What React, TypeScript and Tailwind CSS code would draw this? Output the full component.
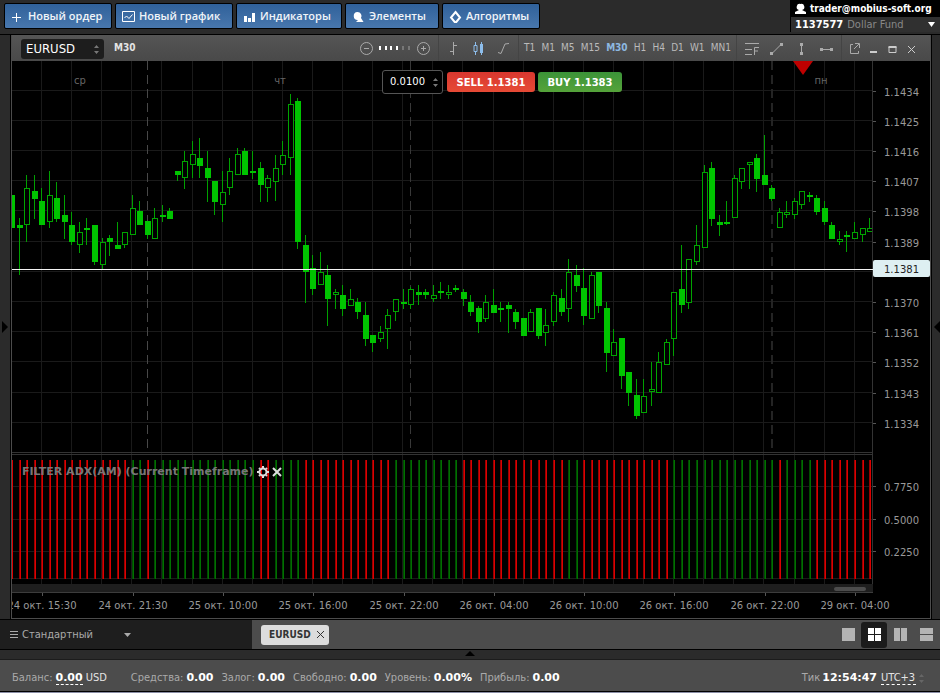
import type { ReactNode } from "react";

// [high, bodyTop, bodyBottom, low, filled]
const candles: number[][] = [
  [195, 195, 228, 228, 1], [218, 225, 228, 275, 1], [175, 188, 225, 242, 0], [175, 191, 199, 219, 1],
  [188, 201, 225, 225, 1], [171, 195, 222, 228, 0], [182, 198, 219, 222, 1], [195, 215, 222, 239, 1],
  [212, 225, 242, 245, 1], [222, 232, 245, 253, 0], [218, 228, 230, 245, 1], [225, 225, 262, 265, 1],
  [238, 242, 265, 269, 0], [235, 238, 242, 256, 1], [222, 245, 249, 249, 1], [232, 232, 245, 248, 0],
  [195, 208, 235, 235, 0], [201, 211, 225, 225, 1], [221, 221, 235, 239, 1], [208, 218, 239, 239, 0],
  [205, 215, 217, 222, 1], [208, 211, 219, 219, 1], [171, 171, 175, 181, 1], [151, 161, 178, 189, 0],
  [141, 154, 165, 178, 0], [138, 158, 166, 178, 1], [151, 168, 178, 202, 1], [181, 181, 202, 215, 1],
  [171, 192, 205, 222, 0], [158, 171, 188, 195, 0], [148, 154, 175, 175, 0], [148, 151, 175, 175, 1],
  [151, 171, 173, 179, 1], [162, 168, 185, 202, 1], [175, 178, 188, 202, 0], [155, 168, 182, 201, 0],
  [141, 155, 165, 175, 0], [94, 104, 158, 175, 0], [98, 101, 242, 249, 1], [235, 245, 272, 303, 1],
  [255, 268, 289, 295, 1], [252, 272, 285, 285, 0], [265, 275, 299, 326, 1], [289, 292, 295, 309, 0],
  [285, 295, 309, 316, 1], [289, 299, 306, 306, 0], [298, 302, 312, 319, 1], [302, 315, 339, 346, 1],
  [335, 335, 343, 352, 1], [326, 332, 339, 342, 0], [309, 315, 329, 349, 0], [299, 299, 312, 321, 0],
  [289, 302, 304, 309, 1], [287, 289, 305, 309, 0], [285, 292, 295, 305, 1], [289, 292, 295, 299, 1],
  [285, 295, 299, 302, 0], [282, 291, 293, 299, 1], [285, 292, 295, 299, 0], [285, 288, 290, 292, 1],
  [289, 292, 299, 306, 1], [295, 302, 312, 316, 1], [306, 308, 322, 333, 1], [295, 302, 319, 322, 0],
  [289, 305, 313, 313, 1], [302, 308, 310, 322, 1], [302, 305, 309, 333, 1], [309, 312, 322, 329, 1],
  [318, 318, 336, 336, 1], [309, 312, 332, 332, 0], [308, 308, 336, 339, 1], [309, 325, 333, 346, 0],
  [292, 295, 322, 326, 0], [289, 298, 312, 316, 1], [259, 272, 309, 322, 0], [265, 275, 286, 292, 1],
  [268, 288, 316, 325, 1], [272, 275, 319, 319, 0], [272, 272, 306, 313, 1], [302, 308, 353, 372, 1],
  [329, 342, 356, 356, 0], [338, 338, 376, 389, 1], [372, 372, 393, 406, 1], [379, 395, 416, 419, 1],
  [379, 396, 413, 413, 0], [362, 389, 392, 406, 0], [352, 362, 393, 393, 0], [339, 342, 365, 365, 0],
  [292, 292, 339, 356, 0], [245, 289, 305, 313, 1], [259, 259, 303, 309, 0], [225, 245, 262, 265, 0],
  [165, 172, 248, 248, 0], [162, 168, 219, 226, 1], [215, 222, 225, 236, 1], [201, 222, 224, 225, 1],
  [175, 178, 218, 218, 0], [168, 168, 182, 189, 0], [162, 162, 165, 189, 0], [154, 158, 179, 192, 1],
  [135, 175, 185, 185, 1], [185, 188, 199, 201, 1], [208, 212, 228, 228, 0], [201, 212, 215, 218, 0],
  [198, 201, 215, 219, 0], [191, 191, 205, 209, 0], [192, 195, 197, 202, 1], [195, 198, 212, 215, 1],
  [201, 208, 222, 225, 1], [222, 225, 239, 239, 1], [231, 239, 242, 245, 0], [231, 235, 237, 252, 1],
  [222, 232, 239, 239, 0], [228, 228, 235, 242, 0], [218, 228, 232, 232, 0],
];

// green stretches of the ADX filter, everything else is red
const upRanges = [[16, 17], [19, 32], [35, 38], [51, 59], [74, 75], [88, 101], [103, 106]];
const isUp = (i: number) => upRanges.some(([a, b]) => i >= a && i <= b);

const prices = ["1.1434", "1.1425", "1.1416", "1.1407", "1.1398", "1.1389", "", "1.1370", "1.1361", "1.1352", "1.1343", "1.1334"];
const levels: [string, number][] = [["0.7750", 486], ["0.5000", 519], ["0.2250", 551]];
const dates = ["24 окт. 15:30", "24 окт. 21:30", "25 окт. 10:00", "25 окт. 16:00", "25 окт. 22:00", "26 окт. 04:00", "26 окт. 10:00", "26 окт. 16:00", "26 окт. 22:00", "29 окт. 04:00"];
const timeframes = ["T1", "M1", "M5", "M15", "M30", "H1", "H4", "D1", "W1", "MN1"];

const STEP = 7.525;
const xAt = (i: number) => Math.round(12.2 + i * STEP);

function Chart() {
  return (
    <svg viewBox="12 61 918 557" className="block w-full h-auto bg-black" fontFamily='"DejaVu Sans", Verdana, sans-serif' fontSize="10">
      <defs>
        <clipPath id="plot">
          <rect x="12" y="61" width="861" height="531" />
        </clipPath>
      </defs>

      {/* Grid */}
      <g stroke="#1a1a1a" shapeRendering="crispEdges">
        {Array.from({ length: 28 }, (_, i) => {
          const x = Math.round(42 + i * 30.1) - 0.5;
          return <line key={i} x1={x} x2={x} y1="61" y2="584" />;
        })}
        {prices.map((_, i) => {
          const y = Math.floor(91 + i * 30.2) - 0.5;
          return <line key={i} x1="12" x2="872" y1={y} y2={y} />;
        })}
        {[486.5, 519.5, 551.5, 578.5].map((y) => (
          <line key={y} x1="12" x2="872" y1={y} y2={y} />
        ))}
      </g>

      {/* Day separators */}
      <g stroke="#484848" strokeDasharray="9 5" shapeRendering="crispEdges">
        <line x1="147.5" x2="147.5" y1="61" y2="452" />
        <line x1="410.5" x2="410.5" y1="61" y2="452" stroke="#383838" />
        <line x1="772" x2="772" y1="61" y2="452" stroke="#242424" strokeWidth="2" />
      </g>
      <g fill="#666" textAnchor="middle">
        <text x="80" y="84">ср</text>
        <text x="280" y="84">чт</text>
        <text x="821" y="84">пн</text>
      </g>

      {/* Candles */}
      <g clipPath="url(#plot)" shapeRendering="crispEdges">
        {candles.map(([h, t, b, l, filled], i) => {
          const x = xAt(i);
          return (
            <g key={i}>
              <rect x={x - 1} y={h} width="1" height={l - h} fill="#00a000" />
              {filled ? (
                <rect x={x - 3} y={t} width="6" height={Math.max(b - t, 2)} fill="#00c400" />
              ) : (
                <rect x={x - 2.5} y={t + 0.5} width="5" height={b - t - 1} fill="#000" stroke="#00a400" />
              )}
            </g>
          );
        })}
      </g>

      {/* Filter bars */}
      <g clipPath="url(#plot)" shapeRendering="crispEdges">
        {candles.map((_, i) => (
          <g key={i}>
            <rect x={xAt(i) - 1} y="460" width="2" height="119" fill={isUp(i) ? "#004c00" : "#980000"} />
            <rect x={xAt(i)} y="460" width="1" height="119" fill={isUp(i) ? "#007000" : "#dc0000"} />
          </g>
        ))}
      </g>

      {/* Pane borders and scroll strip */}
      <g stroke="#333" shapeRendering="crispEdges">
        <line x1="12" x2="873" y1="452.5" y2="452.5" />
        <line x1="12" x2="873" y1="454.5" y2="454.5" />
        <line x1="872.5" x2="872.5" y1="61" y2="592" />
        <rect x="12" y="584" width="861" height="9" fill="#1e1e1e" stroke="none" />
        <line x1="12" x2="873" y1="592.5" y2="592.5" stroke="#3c3c3c" />
      </g>
      <rect x="834" y="587" width="32" height="4" rx="2" fill="#4c4c4c" />

      {/* Price axis */}
      <g fill="#999">
        {prices.map((p, i) => {
          const y = Math.floor(91 + i * 30.2);
          return p && (
            <g key={p}>
              <line x1="873" x2="876" y1={y + 0.5} y2={y + 0.5} stroke="#555" />
              <text x="884" y={y + 5}>{p}</text>
            </g>
          );
        })}
        {levels.map(([label, y]) => (
          <g key={label}>
            <line x1="873" x2="876" y1={y + 0.5} y2={y + 0.5} stroke="#555" />
            <text x="884" y={y + 5}>{label}</text>
          </g>
        ))}
        {dates.map((d, i) => {
          const x = Math.round(42.3 + i * 90.3);
          return (
            <g key={d}>
              <line x1={x + 0.5} x2={x + 0.5} y1="593" y2="596" stroke="#555" />
              <text x={x} y="609" textAnchor="middle">{d}</text>
            </g>
          );
        })}
      </g>

      {/* Current price */}
      <rect x="12" y="269" width="861" height="1" fill="#f4f4f4" />
      <rect x="873" y="260" width="57" height="17" rx="2" fill="#deeff2" />
      <text x="884" y="273" fill="#222">1.1381</text>

      <path d="M793 61H813L803 75Z" fill="#bf0000" />
    </svg>
  );
}

function Stepper({ className }: { className: string }) {
  return (
    <svg className={className} width="5" height="11" viewBox="0 0 5 11" fill="currentColor">
      <path d="M0 4L2.5 1L5 4ZM0 7H5L2.5 10Z" />
    </svg>
  );
}

function TopButton({ width, icon, children }: { width: string; icon: ReactNode; children: ReactNode }) {
  return (
    <button className={`${width} h-[26px] flex items-center gap-1 pl-[6px] border border-black rounded-xs bg-linear-to-b from-[#30619a] to-[#4877ad] font-['Open_Sans',Tahoma,sans-serif] text-[11px] font-semibold text-[#f0f4f8] whitespace-nowrap`}>
      <svg className="shrink-0" width="13" height="13" viewBox="0 0 13 13" fill="none" stroke="#fff">{icon}</svg>
      {children}
    </button>
  );
}

function ToolIcon({ label, width = "w-[25px]", children }: { label: string; width?: string; children: ReactNode }) {
  return (
    <button aria-label={label} className={`${width} flex items-center justify-center`}>
      <svg width="15" height="15" viewBox="0 0 15 15" fill="none" stroke="#aaa">{children}</svg>
    </button>
  );
}

function Stat({ label, value }: { label: string; value: string }) {
  return (
    <span className="flex gap-[3px]">
      {label}: <b className="font-['DejaVu_Sans',Verdana,sans-serif] text-white">{value}</b>
    </span>
  );
}

export default function App() {
  return (
    <div className="min-h-screen bg-black text-[11px] leading-4 text-[#aaa] font-['DejaVu_Sans_Condensed','DejaVu_Sans',Tahoma,sans-serif]">
      {/* Header */}
      <header className="h-[34px] flex justify-between bg-[#2b2b2b]">
        <div className="flex gap-[3px] pl-1 pt-[3px]">
          <TopButton width="w-[108px]" icon={<path d="M5.500 3V12M1 7.500H10" />}>Новый ордер</TopButton>
          <TopButton width="w-[118px]" icon={<path d="M.5 1.500H12.500V11.500H.5ZM2.500 8L4.500 6L7 8.500L10.500 4.500" />}>Новый график</TopButton>
          <TopButton width="w-[106px]" icon={<path d="M1 6H4V12H1ZM5 8H8V12H5ZM9 3H12V12H9Z" fill="#fff" stroke="none" />}>Индикаторы</TopButton>
          <TopButton width="w-[94px]" icon={<path d="M5.500 2A4 4 0 0 1 9 8L11.500 12H4L6 10A4 4 0 1 1 5.500 2Z" fill="#fff" stroke="none" />}>Элементы</TopButton>
          <TopButton width="w-[98px]" icon={<path d="M6.500 2L11 7.500L6.500 13L2 7.500Z" strokeWidth="2" />}>Алгоритмы</TopButton>
        </div>
        <div className="w-[150px] h-8 border-l border-black">
          <div className="h-[17px] flex items-center gap-1 pl-1 bg-black text-[10px] font-bold text-white whitespace-nowrap">
            <svg className="shrink-0" width="11" height="12" viewBox="0 0 11 12" fill="#fff"><path d="M5.500 1A3 3 0 0 1 7 7L11 9V11H0V9L4 7A3 3 0 0 1 5.500 1Z" /></svg>
            trader@mobius-soft.org
          </div>
          <button className="w-full h-[15px] flex items-center gap-1 pl-1 pr-[5px] bg-[#303030] text-[#888]">
            <b className="text-white">1137577</b> Dollar Fund
            <svg className="ml-auto" width="7" height="6" viewBox="0 0 7 6" fill="#fff"><path d="M0 0H7L3.500 5Z" /></svg>
          </button>
        </div>
      </header>

      {/* Chart window */}
      <div className="flex pt-px">
        <button aria-label="Развернуть левую панель" className="w-[10px] flex items-center justify-center bg-[#2b2b2b]">
          <svg width="6" height="12" viewBox="0 0 6 12"><path d="M0 0L6 6L0 12Z" fill="#000" /></svg>
        </button>
        <main className="flex-1 min-w-0 ml-px border-x border-b border-[#4c4c4c]">
          <div className="h-[26px] flex bg-linear-to-b from-[#555] to-[#494949]">
            <label className="w-[83px] h-5 mt-1 ml-[9px] pl-[5px] pr-[5px] flex items-center rounded-[3px] bg-[#1d1d1d]">
              <select aria-label="Инструмент" className="flex-1 min-w-0 appearance-none bg-transparent text-[13px] text-white outline-none">
                <option>EURUSD</option>
              </select>
              <Stepper className="text-[#777]" />
            </label>
            <b className="self-center ml-[10px] text-[10px] text-[#e4e4e4]">M30</b>

            <div className="ml-auto flex items-center gap-[6px] pr-2">
              <button aria-label="Уменьшить"><svg className="block" width="13" height="13" viewBox="0 0 13 13" fill="none" stroke="#aaa"><circle cx="6.500" cy="6.500" r="6" /><path d="M4 6.500H9" /></svg></button>
              <svg width="32" height="4" viewBox="0 0 32 4" fill="#fff"><path d="M0 0H2V4H0ZM6 0H8V4H6ZM11 0H13V4H11ZM17 0H19V4H17Z" /><path d="M23 0H25V4H23ZM29 0H31V4H29Z" fill="#777" /></svg>
              <button aria-label="Увеличить"><svg className="block" width="13" height="13" viewBox="0 0 13 13" fill="none" stroke="#aaa"><circle cx="6.500" cy="6.500" r="6" /><path d="M4 6.500H9M6.500 4V9" /></svg></button>
            </div>
            <div className="flex px-[2px] border-l border-[#444]">
              <ToolIcon label="Бары"><path d="M7.500 1V14M4 10.500H7M8 4.500H11" /></ToolIcon>
              <ToolIcon label="Свечи"><path d="M4.500 1V4M4.500 11V14M3 4.500H6V10.500H3ZM10.500 1V14" stroke="#8dbdeb" /><path d="M9 3H12V12H9Z" fill="#8dbdeb" stroke="none" /></ToolIcon>
              <ToolIcon label="Линия"><path d="M2 11.500L5 12.500L9 3L13 2.500" /></ToolIcon>
            </div>
            <div className="w-[218px] px-[5px] flex items-center justify-between border-l border-[#444]">
              {timeframes.map((tf) => (
                <button key={tf} className={tf === "M30" ? "text-[10px] font-bold text-[#8db8e0]" : "text-[10px] text-[#bbb]"}>{tf}</button>
              ))}
            </div>
            <div className="flex px-[2px] border-l border-[#444]">
              <ToolIcon label="Фибоначчи"><path d="M1 2.500H15M1 8.500H8M1 13.500H8M10.500 14V6.500H15M10.500 10H14" /></ToolIcon>
              <ToolIcon label="Трендовая линия"><path d="M2.500 13L12.500 3" /><path d="M1 11H4V14H1ZM11 2H14V5H11Z" fill="#aaa" stroke="none" /></ToolIcon>
              <ToolIcon label="Вертикальная линия"><path d="M7.500 3V13" /><path d="M6 2H9V5H6ZM6 11H9V14H6Z" fill="#aaa" stroke="none" /></ToolIcon>
              <ToolIcon label="Горизонтальная линия"><path d="M2 8.500H13" /><path d="M1 7H4V10H1ZM11 7H14V10H11Z" fill="#aaa" stroke="none" /></ToolIcon>
            </div>
            <div className="flex pl-[3px] pr-[9px] border-l border-[#444]">
              <ToolIcon width="w-[19px]" label="Открепить"><path d="M6 3.500H3.500V12.500H11.500V10M8 2.500H12.500V7M12 3L7 8" /></ToolIcon>
              <ToolIcon width="w-[19px]" label="Свернуть"><path d="M4 11H11" stroke="#ccc" strokeWidth="2" /></ToolIcon>
              <ToolIcon width="w-[19px]" label="Развернуть"><path d="M4 6H11V11.500H4Z" stroke="#ccc" /><path d="M3.500 6H11.500" stroke="#ccc" strokeWidth="2" /></ToolIcon>
              <ToolIcon width="w-[19px]" label="Закрыть"><path d="M4 5L11 12M11 5L4 12" stroke="#ccc" /></ToolIcon>
            </div>
          </div>

          <div className="relative">
            <Chart />
            <div className="absolute top-[9px] left-[370px] flex items-center gap-[3px] font-['DejaVu_Sans',Verdana,sans-serif]">
              <label className="w-[61px] h-6 mr-px pl-[7px] pr-1 flex items-center border border-[#555] rounded-[3px] bg-black">
                <input aria-label="Объём" defaultValue="0.0100" className="flex-1 min-w-0 bg-transparent text-[10px] text-white outline-none" />
                <Stepper className="text-[#777]" />
              </label>
              <button className="w-[88px] h-5 pt-px rounded-[3px] bg-linear-to-b from-[#d9372f] to-[#e64a35] text-[10px] font-bold text-white">SELL 1.1381</button>
              <button className="w-[84px] h-5 pt-px rounded-[3px] bg-linear-to-b from-[#3b9338] to-[#55a33a] text-[10px] font-bold text-white">BUY 1.1383</button>
            </div>
            <div className="absolute top-[403px] left-[10px] flex items-center gap-[3px] font-['DejaVu_Sans',Verdana,sans-serif]">
              <span className="font-bold text-[#777]">FILTER ADX(AM) (Current Timeframe)</span>
              <button aria-label="Настройки индикатора">
                <svg className="block" width="12" height="12" viewBox="0 0 12 12" fill="none" stroke="#ddd"><circle cx="6" cy="6" r="3.500" strokeWidth="2" /><path d="M6 0V2M6 10V12M0 6H2M10 6H12M2 2L3 3M9 9L10 10M10 2L9 3M3 9L2 10" strokeWidth="2" /></svg>
              </button>
              <button aria-label="Удалить индикатор">
                <svg className="block" width="10" height="10" viewBox="1 1 10 10" stroke="#ddd" strokeWidth="2"><path d="M2 2L10 10M10 2L2 10" /></svg>
              </button>
            </div>
          </div>
        </main>
        <button aria-label="Развернуть правую панель" className="w-2 ml-px flex items-center justify-end bg-[#2b2b2b]">
          <svg width="6" height="12" viewBox="0 0 6 12"><path d="M6 0L0 6L6 12Z" fill="#000" /></svg>
        </button>
      </div>

      {/* Workspace bar */}
      <div className="h-[30px] mt-px flex items-stretch border-b border-black bg-[#4c4c4c]">
        <label className="w-[252px] pl-[10px] flex items-center gap-1 bg-[#1e1e1e]">
          <svg width="8" height="9" viewBox="0 0 8 9" stroke="#aaa"><path d="M0 1.500H8M0 4.500H8M0 7.500H8" /></svg>
          <select aria-label="Рабочее пространство" className="w-[98px] appearance-none bg-transparent outline-none">
            <option>Стандартный</option>
          </select>
          <svg width="7" height="4" viewBox="0 0 7 4" fill="#aaa"><path d="M0 0H7L3.500 4Z" /></svg>
        </label>
        <div className="self-center h-5 ml-[9px] pl-2 pr-1 flex items-center gap-[5px] rounded-[3px] bg-[#dcdcdc] text-[10px] font-bold text-[#333]">
          EURUSD
          <button aria-label="Закрыть вкладку"><svg className="block" width="9" height="9" viewBox="0 0 9 9" stroke="#333"><path d="M1 1L8 8M8 1L1 8" /></svg></button>
        </div>
        <div className="ml-auto flex items-center pr-px">
          <button aria-label="Одно окно" className="w-[26px] h-[26px] flex items-center justify-center"><svg width="13" height="13" fill="#b4b4b4"><path d="M0 0H13V13H0Z" /></svg></button>
          <button aria-label="Сетка" className="w-[26px] h-[26px] flex items-center justify-center rounded-[3px] bg-[#1b1b1b]"><svg width="13" height="13" fill="#fff"><path d="M0 0H6V6H0ZM7 0H13V6H7ZM0 7H6V13H0ZM7 7H13V13H7Z" /></svg></button>
          <button aria-label="Столбцы" className="w-[26px] h-[26px] flex items-center justify-center"><svg width="13" height="13" fill="#b4b4b4"><path d="M0 0H6V13H0ZM7 0H13V13H7Z" /></svg></button>
          <button aria-label="Строки" className="w-[26px] h-[26px] flex items-center justify-center"><svg width="13" height="13" fill="#b4b4b4"><path d="M0 0H13V6H0ZM0 7H13V13H0Z" /></svg></button>
        </div>
      </div>
      <button aria-label="Развернуть нижнюю панель" className="w-full h-[10px] flex items-start justify-center pt-px border-b border-[#1c1c1c] bg-[#2b2b2b]">
        <svg width="10" height="5" viewBox="0 0 10 5"><path d="M0 5L5 0L10 5Z" fill="#000" /></svg>
      </button>

      {/* Status bar */}
      <footer className="h-[31px] flex items-center gap-2 pl-3 pr-4 pt-1 bg-[#4c4c4c] whitespace-nowrap">
        <span className="mr-4 flex items-baseline gap-[3px]">
          Баланс: <b className="font-['DejaVu_Sans',Verdana,sans-serif] text-white border-b border-dashed border-white leading-3">0.00</b>
          <span className="text-[#e4e4e4]">USD</span>
        </span>
        <Stat label="Средства" value="0.00" />
        <Stat label="Залог" value="0.00" />
        <Stat label="Свободно" value="0.00" />
        <Stat label="Уровень" value="0.00%" />
        <Stat label="Прибыль" value="0.00" />
        <div className="ml-auto flex items-baseline gap-[2px]">
          Тик <b className="font-['DejaVu_Sans',Verdana,sans-serif] text-white">12:54:47</b>
          <label className="ml-[2px] flex items-center gap-[3px]">
            <select aria-label="Часовой пояс" className="appearance-none bg-transparent border-b border-dashed border-white text-[#e4e4e4] leading-3 outline-none">
              <option>UTC+3</option>
            </select>
            <Stepper className="text-[#666]" />
          </label>
        </div>
      </footer>
      <div className="h-[2px] border-b border-[#8a8ea6]" />
    </div>
  );
}
